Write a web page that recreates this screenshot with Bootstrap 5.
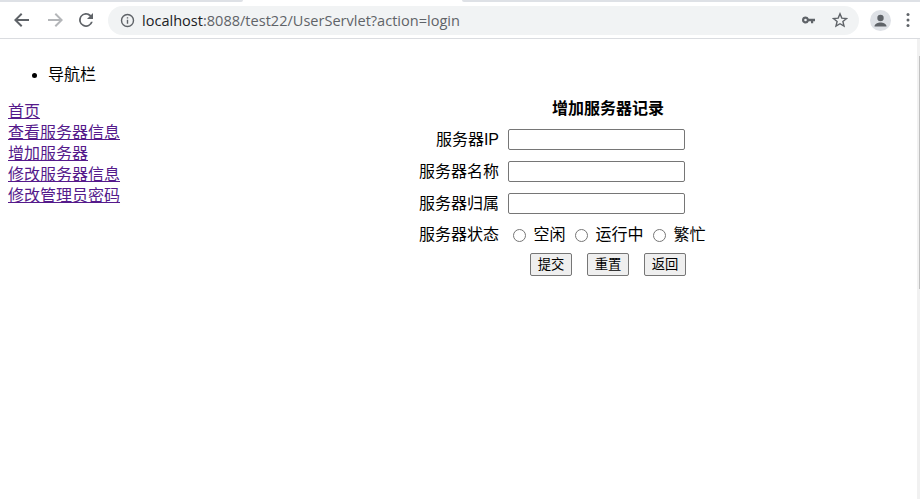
<!DOCTYPE html>
<html lang="zh">
<head>
<meta charset="utf-8">
<title>服务器</title>
<link href="https://cdn.jsdelivr.net/npm/bootstrap@5.3.0/dist/css/bootstrap.min.css" rel="stylesheet">
<style>
html,body{height:100%;overflow:hidden}
body{font-family:"Liberation Sans","Noto Sans CJK SC",sans-serif;font-size:16px;line-height:normal;color:#000;background:#fff;position:relative}
.tabedge{height:2px}
.tabgrey{background:#dee1e6}
.tabgrey-l{width:243px;border-bottom-right-radius:3px}
.tabgap{width:219px}
.tabgrey-r{border-bottom-left-radius:3px}
.chrome-bar{height:37px;border-bottom:1px solid #dadce0;padding-left:13px;padding-right:9px}
.omni{height:29px;width:751px;margin-left:13px;border-radius:15px;background:#f1f3f4;padding:0 11px 0 12px;font-family:"Open Sans","Liberation Sans",sans-serif;font-size:14.55px;color:#5f6368}
.omni b{font-weight:400;color:#202124}
.ic{display:block;flex:none}
.gap-nav{margin-left:15px}
.gap-reload{margin-left:13px}
.gap-star{margin-left:15px}
.gap-menu{margin-left:15px}
.urltext{margin-left:7px}
.avatar{width:21px;height:21px;border-radius:50%;background:#dee1e6;margin-left:11px;overflow:hidden}
.pagebody{padding:0 8px}
.navlist{margin:26px 0 15px;padding-left:40px;height:20px;line-height:20px}
.sidelinks{width:398px;flex:none;padding-top:1px}
.sidelinks a{display:block;line-height:21px;color:#551a8b;text-decoration:underline}
.formwrap{margin-top:-1px}
.formtitle{font-weight:700;padding-left:146px;line-height:20px;margin-bottom:10px}
.frow{height:32px}
.lastrow{height:31px}
.lbl{width:93px;text-align:right;line-height:20px;padding-top:1px}
.lastrow .lbl{padding-top:0}
.txt{width:177px;height:21px;margin-left:9px;padding:1px 2px;border:1px solid #767676;border-radius:2px;background:#fff}
.rad{appearance:auto;width:13px;height:13px;margin:0 7.500px 0 0;flex:none}
.radset{margin-left:14px;line-height:20px;height:20px}
.radset span{margin-right:9.500px}
.btnrow{padding-left:124px;gap:15px;margin-top:-3px}
.rawbtn{width:42px;height:23px;padding:0;font-size:13.33px;border:1px solid #767676;border-radius:2px;background:#efefef;color:#000;line-height:1;font-family:inherit}
.sbar-track{position:absolute;top:39px;right:0;bottom:0;width:3px;background:#f1f1f1}
.sbar-thumb{position:absolute;top:17px;right:0;width:1px;height:233px;background:#c1c1c1}
</style>
</head>
<body>
<div class="tabedge d-flex"><div class="tabgrey tabgrey-l"></div><div class="tabgap"></div><div class="tabgrey tabgrey-r flex-grow-1"></div></div>
<div class="chrome-bar d-flex align-items-center">
  <svg class="ic" width="18" height="18" viewBox="0 0 18 18"><path d="M16 8H4.800l4.600-4.600L8 2 1 9l7 7 1.400-1.400L4.800 10H16z" fill="#5f6368"/></svg>
  <svg class="ic gap-nav" width="18" height="18" viewBox="0 0 18 18"><path d="M2 8h11.200L8.600 3.400 10 2l7 7-7 7-1.400-1.400 4.600-4.600H2z" fill="#b4b6b9"/></svg>
  <svg class="ic gap-reload" width="18" height="18" viewBox="0 0 18 18"><path d="M14 4a7 7 0 1 0 1.800 6.800h-1.900A5.200 5.200 0 1 1 9 3.800c1.400 0 2.700.6 3.700 1.500L10 8h6V2z" fill="#5f6368"/></svg>
  <div class="omni d-flex align-items-center">
    <svg class="ic" width="15" height="15" viewBox="0 0 15 15"><circle cx="7.500" cy="7.500" r="6" fill="none" stroke="#5f6368" stroke-width="1.400"/><path d="M6.800 6.800h1.400v4H6.800zM6.800 4.200h1.400v1.400H6.800z" fill="#5f6368"/></svg>
    <span class="urltext flex-grow-1 text-nowrap"><b>localhost</b>:8088/test22/UserServlet?action=login</span>
    <svg class="ic" width="16" height="16" viewBox="0 0 16 16"><path d="M4.500 4.500a3.500 3.500 0 1 0 3.300 4.700H10v2h2.200v-2h1.800V6.800H7.800a3.500 3.500 0 0 0-3.300-2.300zm0 2.200a1.300 1.300 0 1 1 0 2.600 1.300 1.300 0 0 1 0-2.600z" fill="#5f6368"/></svg>
    <svg class="ic gap-star" width="16" height="16" viewBox="0 0 16 16"><path d="M8 1.800l1.800 4.300 4.700.4-3.600 3 1.100 4.600L8 11.700l-4 2.400 1.100-4.600-3.600-3 4.700-.4z" fill="none" stroke="#5f6368" stroke-width="1.400"/></svg>
  </div>
  <div class="avatar d-flex justify-content-center">
    <svg class="ic" width="21" height="21" viewBox="0 0 21 21"><circle cx="10.500" cy="8" r="3.200" fill="#5f6368"/><path d="M4.500 16.500c0-2.700 3.500-4 6-4s6 1.300 6 4z" fill="#5f6368"/></svg>
  </div>
  <svg class="ic gap-menu" width="4" height="16" viewBox="0 0 4 16"><circle cx="2" cy="2.500" r="1.500" fill="#5f6368"/><circle cx="2" cy="8" r="1.500" fill="#5f6368"/><circle cx="2" cy="13.500" r="1.500" fill="#5f6368"/></svg>
</div>
<div class="pagebody">
  <ul class="navlist"><li>导航栏</li></ul>
  <div class="d-flex">
    <div class="sidelinks">
      <a href="#">首页</a>
      <a href="#">查看服务器信息</a>
      <a href="#">增加服务器</a>
      <a href="#">修改服务器信息</a>
      <a href="#">修改管理员密码</a>
    </div>
    <form class="formwrap">
      <div class="formtitle">增加服务器记录</div>
      <div class="frow d-flex align-items-start"><label class="lbl">服务器IP</label><input class="txt" type="text"></div>
      <div class="frow d-flex align-items-start"><label class="lbl">服务器名称</label><input class="txt" type="text"></div>
      <div class="frow d-flex align-items-start"><label class="lbl">服务器归属</label><input class="txt" type="text"></div>
      <div class="frow lastrow d-flex align-items-start">
        <label class="lbl">服务器状态</label>
        <div class="radset d-flex align-items-center text-nowrap">
          <input class="rad" type="radio" name="st"><span>空闲</span>
          <input class="rad" type="radio" name="st"><span>运行中</span>
          <input class="rad" type="radio" name="st"><span>繁忙</span>
        </div>
      </div>
      <div class="btnrow d-flex">
        <button class="rawbtn" type="submit">提交</button>
        <button class="rawbtn" type="reset">重置</button>
        <button class="rawbtn" type="button">返回</button>
      </div>
    </form>
  </div>
</div>
<div class="sbar-track"><div class="sbar-thumb"></div></div>
<script src="https://cdn.jsdelivr.net/npm/bootstrap@5.3.0/dist/js/bootstrap.bundle.min.js"></script>
</body>
</html>
